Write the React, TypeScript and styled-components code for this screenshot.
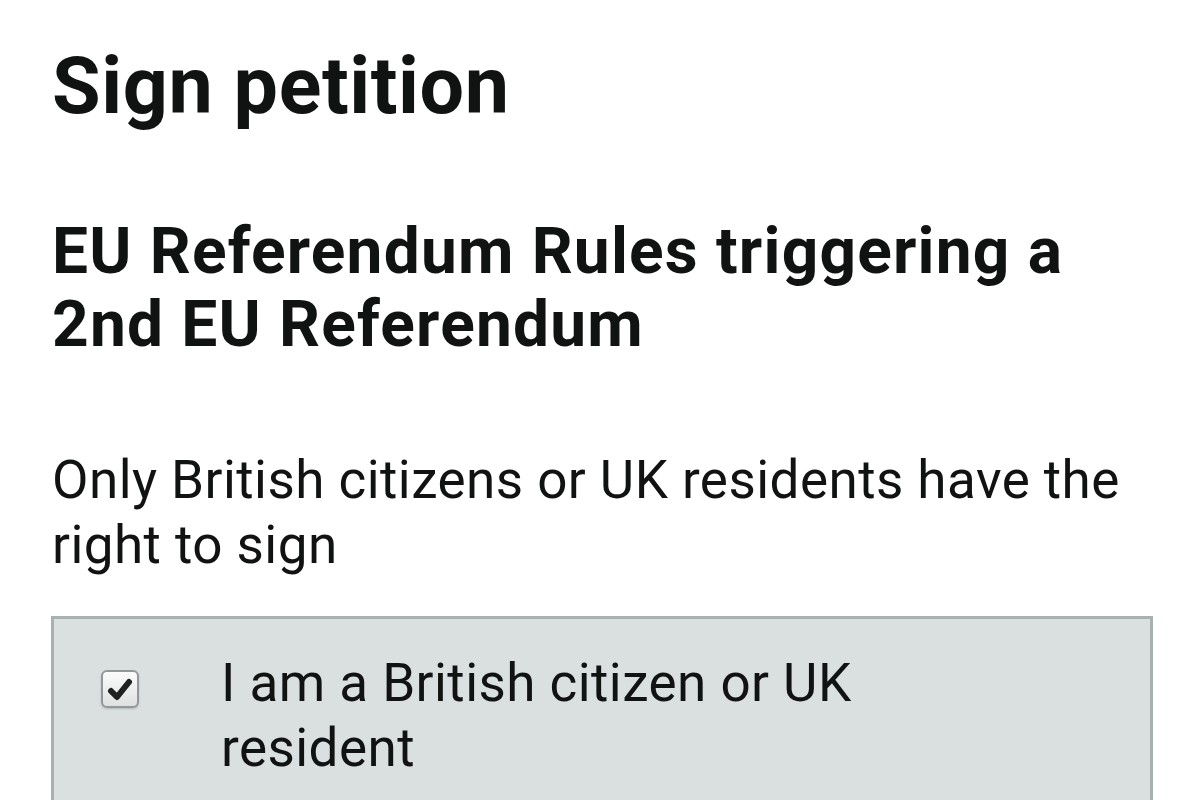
import React, { useState } from "react";
import styled, { createGlobalStyle } from "styled-components";

const GlobalStyle = createGlobalStyle`
  html, body {
    margin: 0;
    padding: 0;
    background: #ffffff;
  }
  body {
    font-family: Roboto, "Noto Sans", "Liberation Sans", sans-serif;
    color: #111212;
    overflow: hidden;
  }
`;

const Page = styled.main`
  width: 1102px;
  padding: 47px 0 0 51px;
`;

const Title = styled.h1`
  margin: 0 0 0 1px;
  font-size: 79px;
  font-weight: 700;
  line-height: 78px;
  letter-spacing: 0.6px;
`;

const PetitionName = styled.h2`
  margin: 90px 0 0 1px;
  font-size: 64px;
  font-weight: 700;
  line-height: 73px;
  letter-spacing: 1.2px;
`;

const Notice = styled.p`
  margin: 87px 0 0 1px;
  font-size: 53px;
  font-weight: 400;
  line-height: 65px;
  letter-spacing: 0.45px;
`;

const Panel = styled.div`
  margin-top: 38px;
  display: flex;
  align-items: flex-start;
  gap: 82px;
  min-height: 240px;
  padding: 32px 0 0 47px;
  background: #dadfdf;
  border: 3px solid #a9b0b0;
  border-bottom: none;
`;

const CheckBox = styled.label`
  position: relative;
  flex: none;
  box-sizing: border-box;
  width: 38px;
  height: 38px;
  margin-top: 19px;
  border: 2px solid #939797;
  border-radius: 6px;
  background: linear-gradient(#fbfbfb, #dfe1e1);
  box-shadow: 0 1px 2px rgba(0, 0, 0, 0.18);
  cursor: pointer;

  input {
    position: absolute;
    opacity: 0;
    inset: 0;
    margin: 0;
  }

  svg {
    position: absolute;
    left: 4px;
    top: 4px;
  }
`;

const Label = styled.span`
  max-width: 720px;
  font-size: 53px;
  line-height: 65px;
  letter-spacing: 0.45px;
`;

export default function App() {
  const [checked, setChecked] = useState(true);

  return (
    <>
      <GlobalStyle />
      <Page>
        <Title>Sign petition</Title>
        <PetitionName>EU Referendum Rules triggering a 2nd EU Referendum</PetitionName>
        <Notice>Only British citizens or UK residents have the right to sign</Notice>
        <Panel>
          <CheckBox>
            <input
              type="checkbox"
              checked={checked}
              onChange={() => setChecked(!checked)}
            />
            {checked && (
              <svg width="26" height="26" viewBox="0 0 26 26">
                <path d="M4 15 L10 21 L22 6" fill="none" stroke="#1f2121" strokeWidth="6" strokeLinejoin="round" strokeLinecap="round" />
              </svg>
            )}
          </CheckBox>
          <Label>I am a British citizen or UK resident</Label>
        </Panel>
      </Page>
    </>
  );
}
